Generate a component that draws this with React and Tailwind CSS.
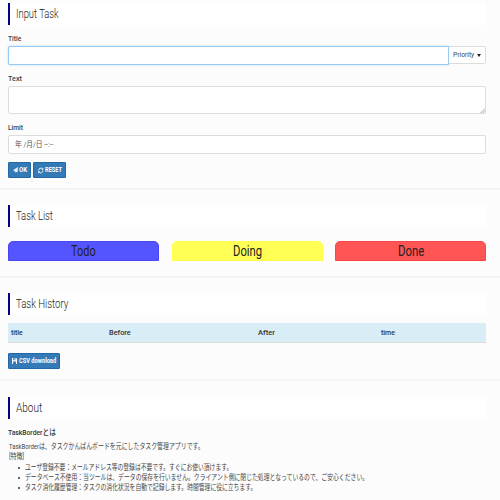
import { useLayoutEffect, useRef } from "react";

// Single line of text condensed horizontally to a given width.
function Fit({ w, className = "", children }) {
  const ref = useRef(null);
  useLayoutEffect(() => {
    const el = ref.current;
    el.style.transform = `scaleX(${w / el.offsetWidth})`;
  }, [w]);
  return (
    <span className="block shrink-0" style={{ width: w }}>
      <span ref={ref} className={`block w-max origin-left whitespace-nowrap ${className}`}>
        {children}
      </span>
    </span>
  );
}

function Heading({ w, children }) {
  return (
    <h2 className="flex h-[22px] items-center border-l-2 border-[#000088] bg-white pl-[6px] text-[12px] font-light leading-[22px] text-[#222]">
      <Fit w={w}>{children}</Fit>
    </h2>
  );
}

function Label({ w, children }) {
  return (
    <label className="block h-[10px] text-[8px] font-medium leading-[12px] text-[#444]">
      <Fit w={w}>{children}</Fit>
    </label>
  );
}

function Button({ className, children }) {
  return (
    <button
      className={`flex h-4 items-center rounded-[1px] border border-[#2268a4] bg-[#337ab7] text-[8px] font-bold leading-none text-white ${className}`}
    >
      {children}
    </button>
  );
}

function SendIcon() {
  return (
    <svg viewBox="0 0 10 10" className="mr-[1px] h-[6px] w-[5px] shrink-0" preserveAspectRatio="none" fill="currentColor">
      <path d="M10 0 L8.8 9 L5.6 7.5 L4 10 L3.7 6.8 L0 5.5 Z" />
      <path d="M8.6 2 L4.2 6.6" stroke="#337ab7" strokeWidth=".5" />
    </svg>
  );
}

function RefreshIcon() {
  return (
    <svg viewBox="0 0 12 14" className="mr-[1.5px] h-[7px] w-[5.5px] shrink-0" fill="none" stroke="currentColor" strokeWidth="2">
      <path d="M1.2 7 A5 5.5 0 0 1 9.5 3.2 M10.8 7 A5 5.5 0 0 1 2.5 10.8" />
      <path d="M11.5 .5 V5.5 H7.5 Z M.5 13.5 V8.5 H4.5 Z" fill="currentColor" stroke="none" />
    </svg>
  );
}

function SaveIcon() {
  return (
    <svg viewBox="0 0 10 12" className="mr-[2px] h-[6px] w-[5px] shrink-0" fill="currentColor">
      <path d="M0 0 H2.5 V4.5 H7 V0 H8.5 L10 1.8 V12 H8 V7 H2 V12 H0 Z M5 .5 H6.3 V3.5 H5 Z" />
    </svg>
  );
}

const lanes = [
  { name: "Todo", w: 25, style: "border-[#4646f4] bg-[#5555ff]" },
  { name: "Doing", w: 29, style: "border-[#ffff48] bg-[#ffff55]" },
  { name: "Done", w: 26, style: "border-[#fa4448] bg-[#ff5555]" },
];

const features = [
  { w: 207, text: "ユーザ登録不要：メールアドレス等の登録は不要です。すぐにお使い頂けます。" },
  { w: 343, text: "データベース不使用：当ツールは、データの保存を行いません。クライアント側に閉じた処理となっているので、ご安心ください。" },
  { w: 231, text: "タスク消化履歴管理：タスクの消化状況を自動で記録します。時間管理に役に立ちます。" },
];

export default function App() {
  return (
    <main className="h-[500px] w-[500px] overflow-hidden bg-[#fcfcfc] pt-[3px] font-['Roboto','Noto_Sans_CJK_JP',sans-serif] text-[#333]">
      <section className="h-[185px] pl-2 pr-[14px]">
        <Heading w={43}>Input Task</Heading>
        <div className="mt-2">
          <Label w={13.5}>Title</Label>
        </div>
        <div className="mt-[3px] flex h-[19px] items-start">
          <input className="h-[19px] w-[441px] rounded-l-[2px] border border-[#99caf5] bg-white shadow-[0_0_2px_#a5d0f5] outline-none" />
          <button className="flex h-[18px] flex-1 items-center rounded-r-[2px] border border-l-0 border-[#dcdcdc] bg-white pl-1 text-[8px] leading-none text-[#444]">
            <Fit w={21}>Priority</Fit>
            <span className="ml-[3px] h-0 w-0 border-x-[2px] border-t-[3px] border-x-transparent border-t-[#222]" />
          </button>
        </div>
        <div className="mt-2">
          <Label w={13.5}>Text</Label>
        </div>
        <div className="mt-[3px] flex h-7 items-end justify-end rounded-[2px] border border-[#dcdcdc] bg-white">
          <svg viewBox="0 0 5 5" className="h-[5px] w-[5px]" stroke="#888" strokeWidth=".7">
            <path d="M.5 5 L5 .5 M2.8 5 L5 2.8" />
          </svg>
        </div>
        <div className="mt-2">
          <Label w={15}>Limit</Label>
        </div>
        <div className="mt-[3px] flex h-[19px] items-center rounded-[2px] border border-[#dcdcdc] bg-white pl-[6px] text-[8px] leading-none text-[#555]">
          <Fit w={38}>年 /月/日 --:--</Fit>
        </div>
        <div className="mt-2 flex gap-[2px]">
          <Button className="w-[23px] pl-[4px]">
            <SendIcon />
            <Fit w={8.5}>OK</Fit>
          </Button>
          <Button className="w-[33px] pl-[4px]">
            <RefreshIcon />
            <Fit w={17}>RESET</Fit>
          </Button>
        </div>
      </section>
      <hr className="border-t-2 border-[#f4f4f4]" />
      <section className="h-[86px] pl-2 pr-[14px] pt-[15px]">
        <Heading w={37}>Task List</Heading>
        <div className="mt-[14px] grid grid-cols-3 gap-[12.5px]">
          {lanes.map((lane) => (
            <div
              key={lane.name}
              className={`flex h-[19.5px] items-center justify-center rounded-t-[5px] border text-[14px] leading-none text-[#222] ${lane.style}`}
            >
              <Fit w={lane.w}>{lane.name}</Fit>
            </div>
          ))}
        </div>
      </section>
      <hr className="border-t-2 border-[#f4f4f4]" />
      <section className="h-[101px] pl-2 pr-[14px] pt-[15px]">
        <Heading w={52}>Task History</Heading>
        <div className="mt-[8px] grid h-5 grid-cols-[97.5px_149.5px_122.5px_1fr] items-center border-b border-[#ddd] bg-[#d9edf7] pl-[3px] text-[8px] font-medium leading-none">
          <Fit w={12}>title</Fit>
          <Fit w={22}>Before</Fit>
          <Fit w={17}>After</Fit>
          <Fit w={14}>time</Fit>
        </div>
        <div className="mt-[10px]">
          <Button className="w-[52px] pl-[3px]">
            <SaveIcon />
            <Fit w={37}>CSV download</Fit>
          </Button>
        </div>
      </section>
      <hr className="border-t-2 border-[#f4f4f4]" />
      <section className="pl-2 pr-[14px] pt-[16px]">
        <Heading w={26}>About</Heading>
        <h3 className="mt-[8px] h-[10px] text-[8px] font-medium leading-[11px]">
          <Fit w={48}>TaskBorderとは</Fit>
        </h3>
        <div className="mt-[5px] pl-px text-[8px] leading-[10.3px] text-[#444]">
          <Fit w={195}>TaskBorderは、タスクかんばんボードを元にしたタスク管理アプリです。</Fit>
          <Fit w={15}>[特徴]</Fit>
          <ul>
            {features.map((f) => (
              <li key={f.text} className="flex items-center pl-[9px]">
                <span className="mr-[5px] h-[2px] w-[2px] rounded-full bg-[#333]" />
                <Fit w={f.w}>{f.text}</Fit>
              </li>
            ))}
          </ul>
        </div>
      </section>
    </main>
  );
}
